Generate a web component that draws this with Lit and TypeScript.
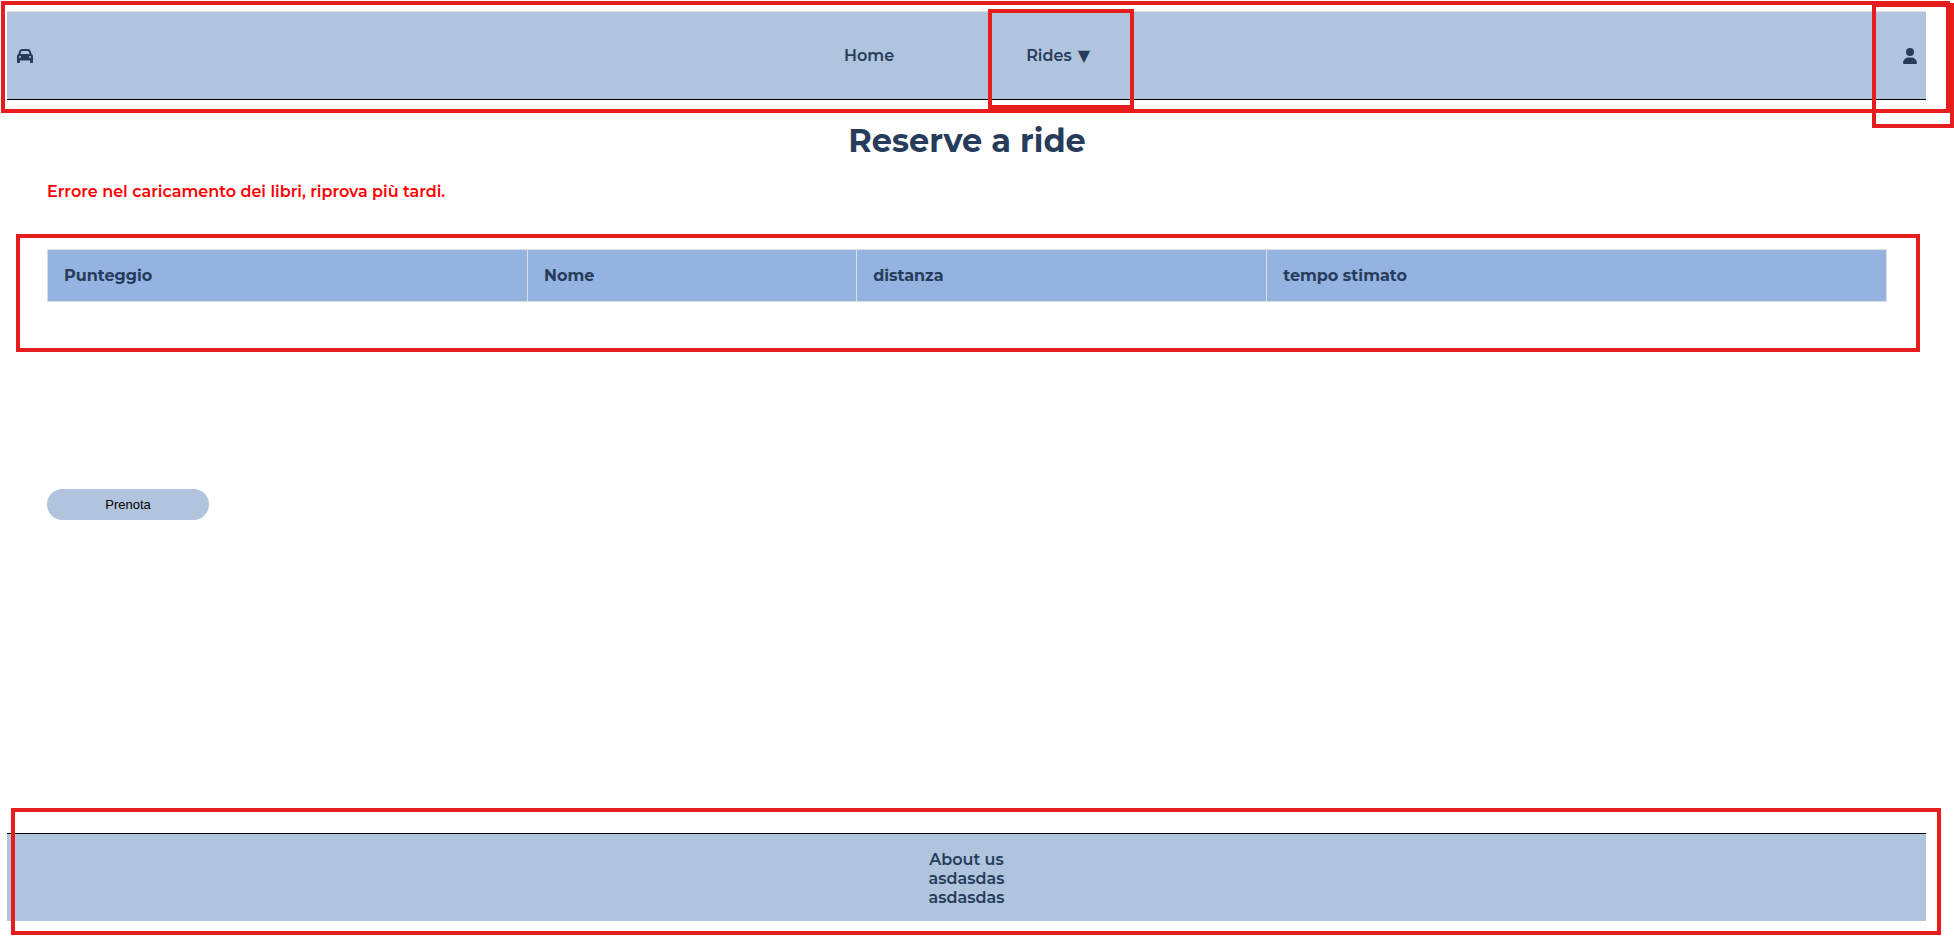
import { LitElement, html, css } from "lit";
import { customElement, property } from "lit/decorators.js";

@customElement("app-header")
export class AppHeader extends LitElement {
  static styles = css`
    :host {
      display: block;
      position: relative;
    }
    .bar {
      display: grid;
      grid-template-columns: 1fr auto 1fr;
      height: 87px;
      padding: 0 9px 0 10px;
      background: #b0c4de;
      border-top: 1px solid #dddddd;
      border-bottom: 1px solid #000;
    }
    .menu {
      display: flex;
      gap: 132px;
    }
    .link {
      position: relative;
      display: flex;
      align-items: center;
      gap: 6px;
      padding: 0;
      border: 0;
      background: none;
      color: #273c5b;
      font: inherit;
      text-decoration: none;
      cursor: pointer;
    }
    .brand {
      justify-self: start;
    }
    .profile {
      justify-self: end;
    }
    .icon {
      display: block;
      height: 16px;
      fill: currentColor;
    }
    .arrow {
      font-family: "DejaVu Sans", sans-serif;
    }
    .mark {
      position: absolute;
      border: 4px solid #e71d1d;
      pointer-events: none;
    }
    .mark-bar {
      inset: -10px -24px -13px -6px;
    }
    .mark-rides {
      inset: -3px -44px -10px -38px;
    }
    .mark-profile {
      inset: -9px -37px -29px -31px;
    }
  `;

  render() {
    return html`
      <header class="bar">
        <a class="link brand" href="#" aria-label="Car sharing">
          <svg class="icon" viewBox="0 0 512 512" aria-hidden="true">
            <path
              d="M135.2 117.4L109.1 192H402.9l-26.1-74.6C372.3 104.6 360.2 96 346.6 96H165.4c-13.6 0-25.7 8.6-30.2 21.4zM39.6 196.8L74.8 96.3C88.3 57.8 124.6 32 165.4 32H346.6c40.8 0 77.1 25.8 90.6 64.3l35.2 100.5c23.2 9.6 39.6 32.5 39.6 59.2V400v48c0 17.7-14.3 32-32 32H448c-17.7 0-32-14.3-32-32V400H96v48c0 17.7-14.3 32-32 32H32c-17.7 0-32-14.3-32-32V400 256c0-26.7 16.4-49.6 39.6-59.2zM128 288a32 32 0 1 0 -64 0 32 32 0 1 0 64 0zm288 32a32 32 0 1 0 0-64 32 32 0 1 0 0 64z"
            />
          </svg>
        </a>
        <nav class="menu">
          <a class="link" href="#home">Home</a>
          <button class="link" type="button" aria-haspopup="true">
            Rides <span class="arrow">▼</span>
            <span class="mark mark-rides"></span>
          </button>
        </nav>
        <a class="link profile" href="#profile" aria-label="Profile">
          <svg class="icon" viewBox="0 0 448 512" aria-hidden="true">
            <path
              d="M224 256A128 128 0 1 0 224 0a128 128 0 1 0 0 256zm-45.7 48C79.8 304 0 383.8 0 482.3C0 498.7 13.3 512 29.7 512H418.3c16.4 0 29.7-13.3 29.7-29.7C448 383.8 368.2 304 269.7 304H178.3z"
            />
          </svg>
          <span class="mark mark-profile"></span>
        </a>
      </header>
      <span class="mark mark-bar"></span>
    `;
  }
}

@customElement("rides-table")
export class RidesTable extends LitElement {
  @property({ attribute: false }) columns: string[] = [];

  static styles = css`
    :host {
      display: block;
      position: relative;
    }
    .table {
      width: 100%;
      border-collapse: collapse;
      table-layout: fixed;
    }
    .cell {
      box-sizing: border-box;
      padding: 16px;
      border: 1px solid #dddddd;
      background: #94b3e1;
      font-weight: 700;
      text-align: left;
    }
    .col-score {
      width: 26.1%;
    }
    .col-name {
      width: 17.9%;
    }
    .col-distance {
      width: 22.3%;
    }
    .mark {
      position: absolute;
      inset: -15px -33px -50px -31px;
      border: 4px solid #e71d1d;
      pointer-events: none;
    }
  `;

  render() {
    return html`
      <table class="table">
        <colgroup>
          <col class="col-score" />
          <col class="col-name" />
          <col class="col-distance" />
          <col />
        </colgroup>
        <thead>
          <tr>
            ${this.columns.map((c) => html`<th class="cell" scope="col">${c}</th>`)}
          </tr>
        </thead>
        <tbody></tbody>
      </table>
      <span class="mark"></span>
    `;
  }
}

@customElement("app-footer")
export class AppFooter extends LitElement {
  static styles = css`
    :host {
      display: block;
      position: relative;
    }
    .bar {
      padding: 16px 0 14px;
      background: #b0c4de;
      border-top: 1px solid #000;
      text-align: center;
    }
    .line {
      margin: 0;
    }
    .mark {
      position: absolute;
      inset: -25px -15px -14px 4px;
      border: 4px solid #e71d1d;
      pointer-events: none;
    }
  `;

  render() {
    return html`
      <footer class="bar">
        <p class="line">About us</p>
        <p class="line">asdasdas</p>
        <p class="line">asdasdas</p>
      </footer>
      <span class="mark"></span>
    `;
  }
}

@customElement("app-root")
export class AppRoot extends LitElement {
  static styles = css`
    :host {
      display: flex;
      flex-direction: column;
      box-sizing: border-box;
      min-height: 100vh;
      padding: 11px 28px 15px 7px;
      background: #fff;
      color: #273c5b;
      font: 600 16px/19px Montserrat, Inter, sans-serif;
    }
    .main {
      flex: 1;
      padding: 21px 39px 20px 40px;
    }
    .title {
      margin: 0;
      font-size: 32px;
      line-height: 40px;
      font-weight: 700;
      text-align: center;
    }
    .error {
      margin: 21px 0 48px;
      color: #ff0000;
    }
    .reserve {
      display: block;
      width: 162px;
      height: 31px;
      margin-top: 187px;
      padding: 0;
      border: 0;
      border-radius: 16px;
      background: #b0c4de;
      color: #000;
      font: 13px "Liberation Sans", Arial, sans-serif;
      cursor: pointer;
    }
  `;

  private columns = ["Punteggio", "Nome", "distanza", "tempo stimato"];

  render() {
    return html`
      <app-header></app-header>
      <main class="main">
        <h1 class="title">Reserve a ride</h1>
        <p class="error" role="alert">Errore nel caricamento dei libri, riprova più tardi.</p>
        <rides-table .columns=${this.columns}></rides-table>
        <button class="reserve" type="button">Prenota</button>
      </main>
      <app-footer></app-footer>
    `;
  }
}
